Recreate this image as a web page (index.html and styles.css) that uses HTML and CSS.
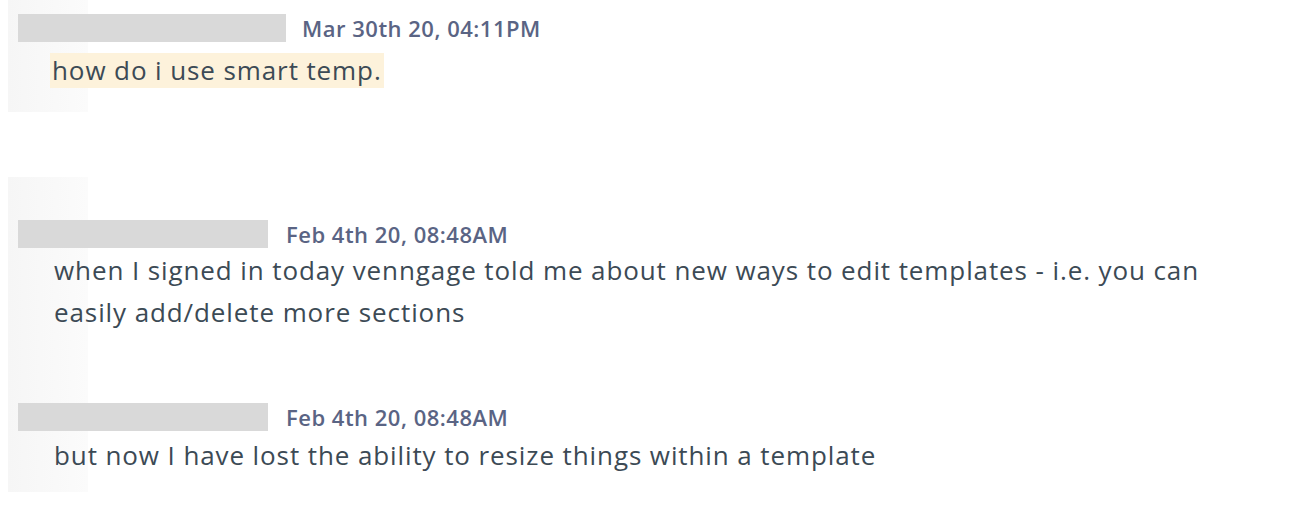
FILE: index.html
```html
<!DOCTYPE html>
<html lang="en">
<head>
    <meta charset="UTF-8">
    <meta name="viewport" content="width=device-width, initial-scale=1.0">
    <title>Conversation</title>
    <link rel="stylesheet" href="styles.css">
</head>
<body>

    <div class="group group-first">
        <div class="msg-head">
            <div class="name-blur wide"></div>
            <span class="time">Mar 30th 20, 04:11PM</span>
        </div>
        <p class="msg-text first-text"><span class="hl">how do i use smart temp.</span></p>
    </div>

    <div class="group group-second">
        <div class="msg-head">
            <div class="name-blur"></div>
            <span class="time">Feb 4th 20, 08:48AM</span>
        </div>
        <p class="msg-text">when I signed in today venngage told me about new ways to edit templates - i.e. you can easily add/delete more sections</p>

        <div class="msg-head next-head">
            <div class="name-blur"></div>
            <span class="time">Feb 4th 20, 08:48AM</span>
        </div>
        <p class="msg-text last-text">but now I have lost the ability to resize things within a template</p>
    </div>

</body>
</html>
```

FILE: styles.css
```css
body {
    margin: 0;
    background: #ffffff;
    font-family: "Open Sans", Arial, sans-serif;
}
.group {
    background: linear-gradient(to right, #f6f6f6, #fbfbfb) no-repeat 8px 0 / 80px 100%;
}
.group-first {
    padding: 14px 0 24px;
}
.group-second {
    margin-top: 65px;
    padding: 43px 0 16px;
}
.msg-head {
    display: flex;
    align-items: center;
    height: 28px;
}
.name-blur {
    width: 250px;
    height: 28px;
    margin-left: 18px;
    background: #d9d9d9;
}
.name-blur.wide {
    width: 268px;
}
.time {
    margin-left: 18px;
    font-size: 22px;
    font-weight: 600;
    letter-spacing: 0.5px;
    color: #5a6484;
}
.wide + .time {
    margin-left: 16px;
}
.next-head {
    margin-top: 70px;
}
.msg-text {
    max-width: 1200px;
    margin: 1px 0 0 54px;
    font-size: 26px;
    letter-spacing: 0.9px;
    line-height: 42px;
    color: #3c4a55;
}
.first-text {
    margin: 11px 0 0 50px;
    line-height: 35px;
}
.hl {
    display: inline-block;
    padding: 0 2px;
    background: #fdf2db;
}
.last-text {
    margin-top: 3px;
}
```
